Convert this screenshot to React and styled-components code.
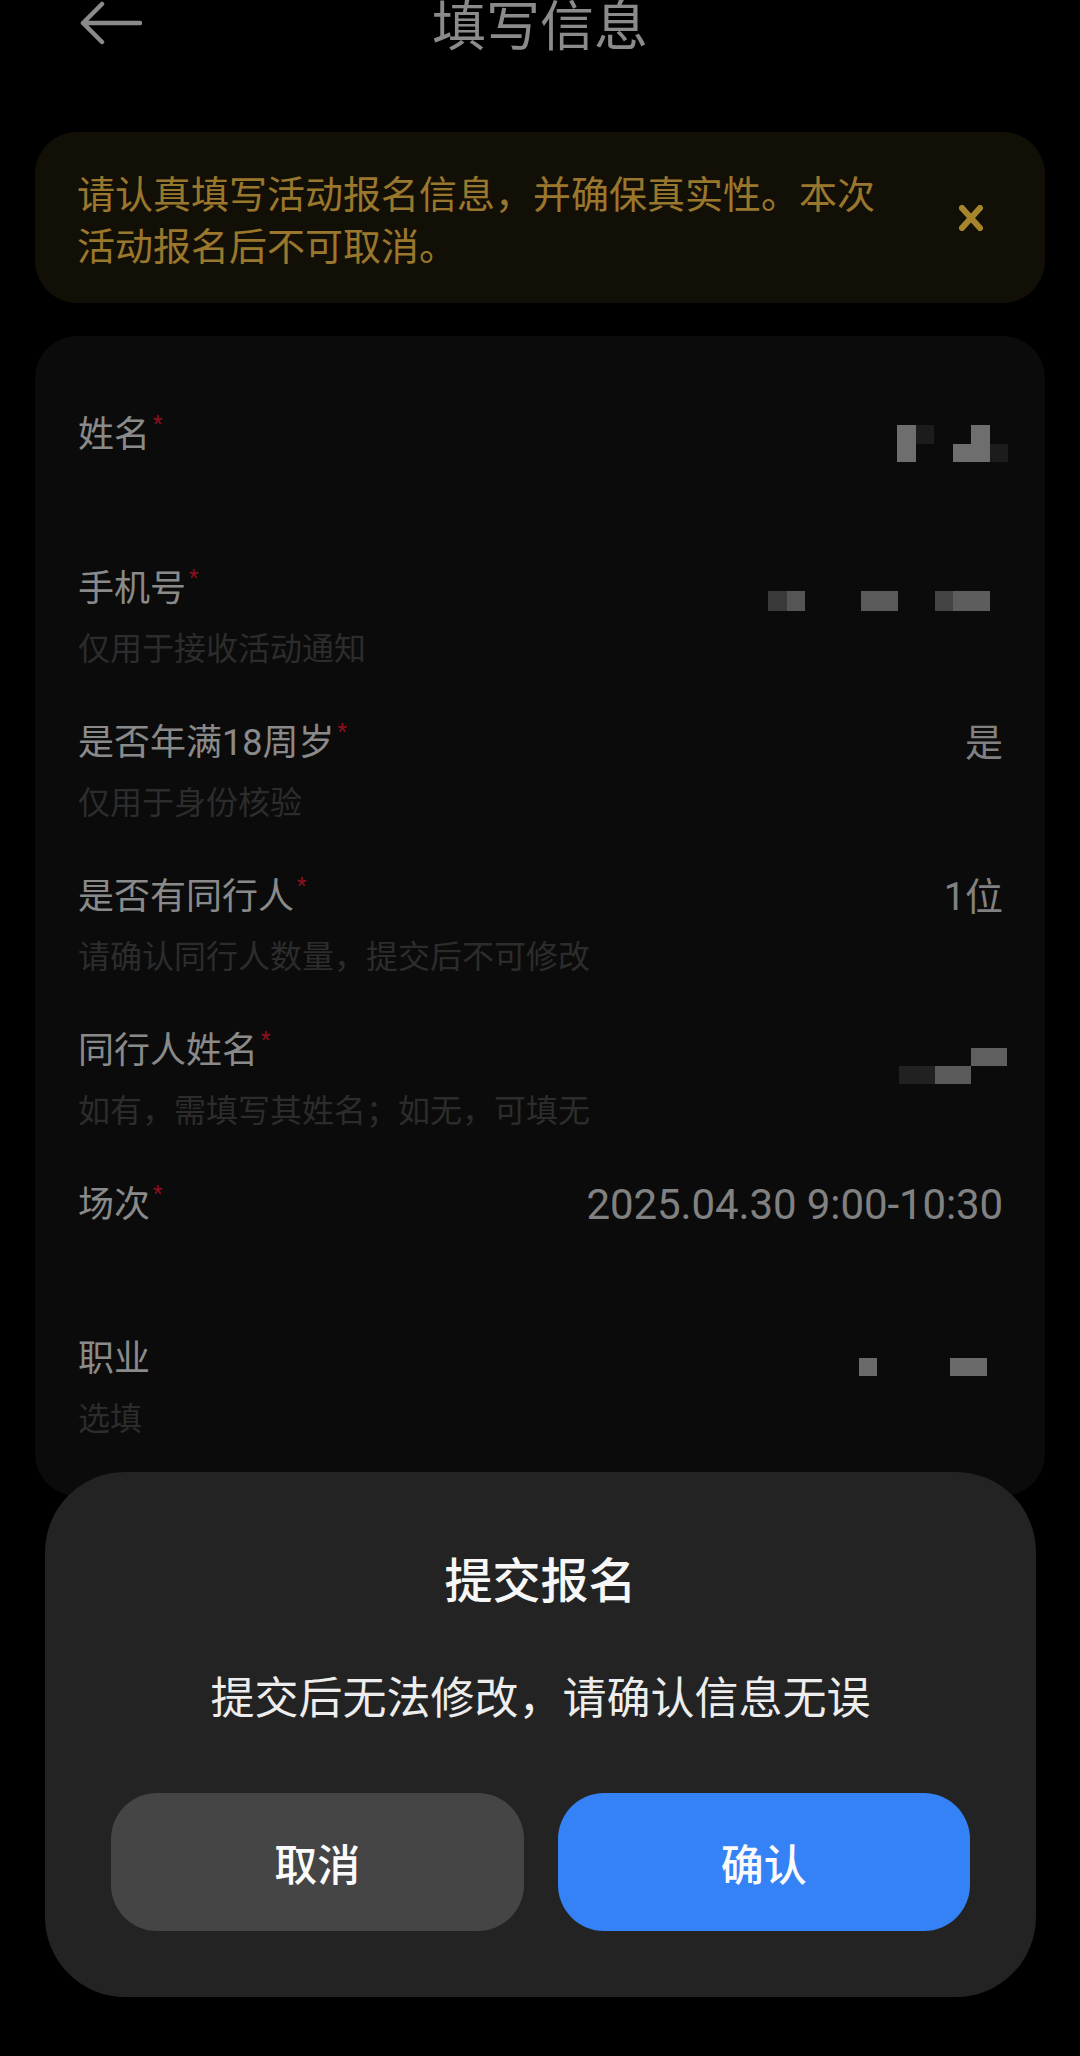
import styled, { createGlobalStyle } from "styled-components";

const GlobalStyle = createGlobalStyle`
  * { box-sizing: border-box; }
  html, body { margin: 0; padding: 0; background: #000; }
  body {
    font-family: Roboto, "Noto Sans CJK SC", sans-serif;
    -webkit-font-smoothing: antialiased;
  }
`

const Page = styled.div`
  position: relative;
  width: 1080px;
  min-height: 2056px;
  overflow: hidden;
  background: #000;
`
const Header = styled.div`
  display: grid;
  grid-template-columns: 1fr auto 1fr;
  align-items: center;
  height: 46px;
`
const BackButton = styled.div`
  display: flex;
  align-items: center;
  padding-left: 80px;
`
const Title = styled.h1`
  margin: 0;
  font-family: "Noto Sans CJK SC", sans-serif;
  font-size: 54px;
  font-weight: 400;
  line-height: 46px;
  color: #d6d6d6;
`
const Notice = styled.div`
  display: flex;
  align-items: center;
  gap: 72px;
  margin: 86px 35px 0;
  padding: 34px 62px 33px 42px;
  border-radius: 42px;
  background: #1d180c;
`
const NoticeText = styled.p`
  flex: 1;
  margin: 0;
  font-family: "Noto Sans CJK SC", sans-serif;
  font-size: 38px;
  line-height: 52px;
  color: #ecb946;
`
const CloseButton = styled.div`
  display: flex;
  width: 24px;
  height: 26px;
`
const Card = styled.div`
  margin: 33px 35px 0;
  padding: 49px 42px 33px 43px;
  border-radius: 42px;
  background: #111111;
`
const Row = styled.div`
  display: flex;
  justify-content: space-between;
  align-items: flex-start;
  height: 154px;
  padding: 25px 0;
`
const LabelBox = styled.div`
  display: flex;
  flex-direction: column;
`
const Label = styled.div`
  display: flex;
  align-items: flex-start;
  font-size: 36px;
  line-height: 50px;
  color: #d4d4d4;
`
const Star = styled.span`
  margin-left: 3px;
  margin-top: -1px;
  font-size: 22px;
  line-height: 30px;
  color: #d41931;
`
const Hint = styled.div`
  margin-top: 10px;
  font-family: "Noto Sans CJK SC", sans-serif;
  font-size: 32px;
  line-height: 44px;
  color: #444444;
`
const Value = styled.div`
  font-size: ${p => (p.$wide ? 42 : 38)}px;
  line-height: 50px;
  letter-spacing: ${p => (p.$wide ? "-0.1px" : "0")};
  color: #c6c6c6;
  white-space: nowrap;
`
const Mosaic = styled.div`
  display: grid;
  grid-template-columns: repeat(${p => p.$cols}, ${p => p.$cell}px);
  grid-auto-rows: ${p => p.$rowH}px;
  margin-top: ${p => p.$top}px;
  margin-right: ${p => p.$right}px;
`
const Cell = styled.div`
  background: ${p => p.$c || "transparent"};
`
const Mask = styled.div`
  position: absolute;
  inset: 0;
  background: rgba(0, 0, 0, 0.35);
`
const Dialog = styled.div`
  position: absolute;
  left: 45px;
  right: 44px;
  bottom: 59px;
  padding: 75px 66px 66px;
  border-radius: 80px;
  background: #232323;
  font-family: "Noto Sans CJK SC", sans-serif;
  text-align: center;
`
const DialogTitle = styled.div`
  font-size: 48px;
  font-weight: 500;
  line-height: 60px;
  color: #f7f7f7;
`
const DialogText = styled.div`
  margin-top: 58px;
  font-size: 44px;
  line-height: 60px;
  color: #ededed;
`
const Actions = styled.div`
  display: grid;
  grid-template-columns: 1fr 1fr;
  gap: 34px;
  margin-top: 68px;
`
const ActionButton = styled.button`
  height: 138px;
  border: none;
  border-radius: 46px;
  background: ${p => (p.$primary ? "#3482f6" : "#454545")};
  color: #fafafa;
  font-family: "Noto Sans CJK SC", sans-serif;
  font-size: 43px;
  font-weight: 500;
`

const BackArrow = () => (
  <svg width="62" height="44" viewBox="0 0 62 44">
    <path d="M60 22H3M22 3L3 22l19 19" fill="none" stroke="#d6d6d6" strokeWidth="4.5" strokeLinecap="round" strokeLinejoin="round"/>
  </svg>
)

const CloseIcon = () => (
  <svg width="24" height="26" viewBox="0 0 24 26">
    <path d="M3 3l18 20M21 3L3 23" stroke="#ffcc44" strokeWidth="6" strokeLinecap="square"/>
  </svg>
)

const Blur = ({ grid, cell, rowH, top, right }) => (
  <Mosaic $cols={grid[0].length} $cell={cell} $rowH={rowH || cell} $top={top} $right={right}>
    {grid.flat().map((c, i) => <Cell key={i} $c={c}/>)}
  </Mosaic>
)

const L = "#a9a9a9", D = "#2b2b2b"

const rows = [
  { label: "姓名", required: true, blur: { grid: [[L, D, 0, 0, L, 0], [L, 0, 0, L, L, D]], cell: 18.5, top: 15, right: -5 } },
  { label: "手机号", required: true, hint: "仅用于接收活动通知", blur: { grid: [["#595959", "#838383", 0, 0, 0, "#8a8a8a", "#8a8a8a", 0, 0, "#696969", "#909090", "#909090"]], cell: 18.5, rowH: 20, top: 27, right: 13 } },
  { label: "是否年满18周岁", required: true, hint: "仅用于身份核验", value: "是" },
  { label: "是否有同行人", required: true, hint: "请确认同行人数量，提交后不可修改", value: "1位" },
  { label: "同行人姓名", required: true, hint: "如有，需填写其姓名；如无，可填无", blur: { grid: [[0, 0, 0, 0, "#939393", "#939393"], ["#343434", "#343434", "#8a8a8a", "#8a8a8a", 0, 0]], cell: 18, top: 22, right: -4 } },
  { label: "场次", required: true, value: "2025.04.30 9:00-10:30", wide: true },
  { label: "职业", hint: "选填", blur: { grid: [["#a3a3a3", 0, 0, 0, 0, "#a3a3a3", "#a3a3a3"]], cell: 18.3, top: 24, right: 16 } },
]

const App = () => {
  return (
    <Page>
      <GlobalStyle/>
      <Header>
        <BackButton><BackArrow/></BackButton>
        <Title>填写信息</Title>
        <div/>
      </Header>
      <Notice>
        <NoticeText>请认真填写活动报名信息，并确保真实性。本次活动报名后不可取消。</NoticeText>
        <CloseButton><CloseIcon/></CloseButton>
      </Notice>
      <Card>
        {rows.map(r => (
          <Row key={r.label}>
            <LabelBox>
              <Label>{r.label}{r.required && <Star>*</Star>}</Label>
              {r.hint && <Hint>{r.hint}</Hint>}
            </LabelBox>
            {r.value && <Value $wide={r.wide}>{r.value}</Value>}
            {r.blur && <Blur {...r.blur}/>}
          </Row>
        ))}
      </Card>
      <Mask/>
      <Dialog>
        <DialogTitle>提交报名</DialogTitle>
        <DialogText>提交后无法修改，请确认信息无误</DialogText>
        <Actions>
          <ActionButton>取消</ActionButton>
          <ActionButton $primary>确认</ActionButton>
        </Actions>
      </Dialog>
    </Page>
  )
}
export default App;
